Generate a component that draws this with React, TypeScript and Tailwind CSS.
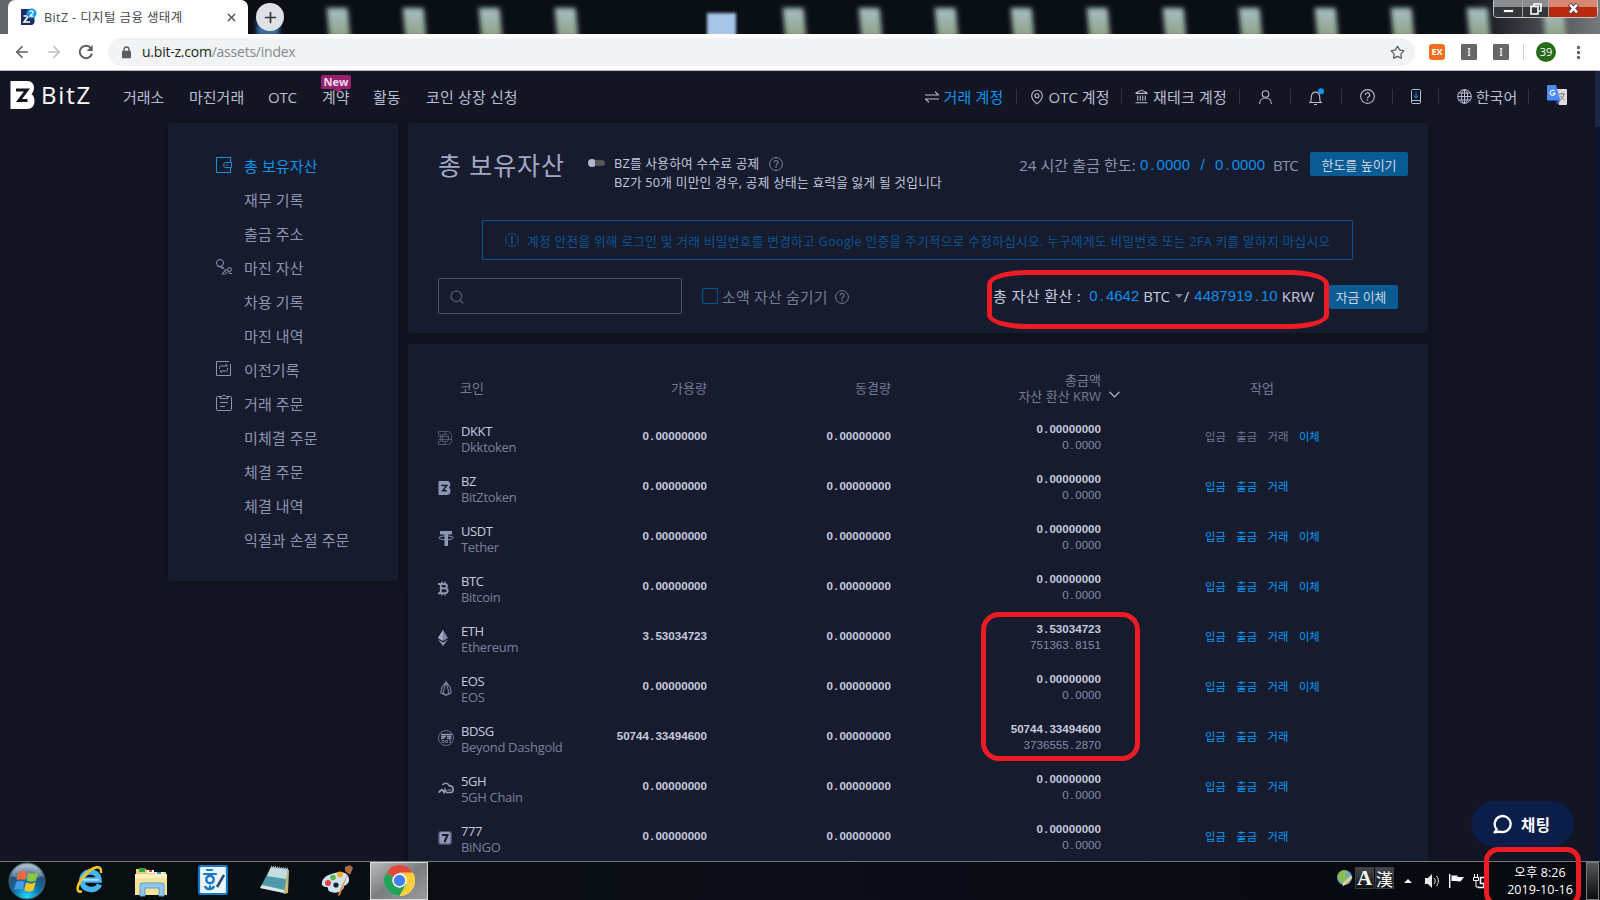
import React from "react";
import { Plus, X, ArrowLeft, ArrowRight, Star, MoreVertical, MapPin, Landmark, Search, ChevronDown } from "lucide-react";

const TILE_POSITIONS = [326, 402, 478, 554, 782, 858, 934, 1010, 1086, 1162, 1238, 1314, 1390, 1466, 1542];

/* Digits keep their own width; every other character gets a digit-wide cell. */
function Num({ value, className = "" }: { value: string; className?: string }) {
  return (
    <span className={"whitespace-pre font-['Liberation_Sans',sans-serif] " + className}>
      {value.split("").map((ch, i) =>
        /\d/.test(ch) ? ch : (
          <span key={i} className="inline-block w-[1ch] text-center">{ch}</span>
        )
      )}
    </span>
  );
}

function Help({ size = 14 }: { size?: number }) {
  return (
    <svg width={size} height={size} viewBox="0 0 14 14" fill="none" stroke="currentColor">
      <circle cx="7" cy="7" r="6.4" strokeWidth="1" />
      <path d="M5 5.500a2 2 0 1 1 3 1.700c-.7.4-1 .7-1 1.500" strokeWidth="1.1" />
      <path d="M7 9.600v1.300" strokeWidth="1.2" />
    </svg>
  );
}

function BMark({ className, z }: { className: string; z: string }) {
  return (
    <svg className={className} viewBox="0 0 24 28">
      <path d="M0 0h17c4 0 6.500 3 6.500 6.500 0 3-1 5-2.500 6.500 2 1.500 3 4 3 7 0 5-3 8-7.500 8H0z" fill="currentColor" />
      <path d="M5.500 9h11l-8 10.500h8.500" fill="none" stroke={z} strokeWidth="3" />
    </svg>
  );
}

function TabStrip() {
  return (
    <div className="relative flex h-[34px] shrink-0 overflow-hidden bg-[#0a0e15]">
      <div className="absolute inset-y-0 left-0 w-[20px] bg-[#626568]" />
      <div className="absolute right-0 top-0 h-[34px] w-[130px] bg-gradient-to-r from-transparent to-[#77797b]" />
      {TILE_POSITIONS.map((x) => (
        <div
          key={x}
          className="absolute top-[8px] h-[30px] w-[21px] skew-x-[5deg] bg-gradient-to-b from-[#a6c0c7] to-[#8f9f80] blur-[2.500px]"
          style={{ left: x + 2 }}
        />
      ))}
      <div className="absolute left-[707px] top-[13px] h-[24px] w-[29px] bg-[#a5c4e6] blur-[1.500px]" />
      <div className="absolute left-[257px] top-[18px] h-[18px] w-[22px] bg-[#3f6fa5] blur-[2px]" />
      <div className="relative z-10 ml-[8px] flex w-[240px] items-center rounded-t-[7px] bg-white pl-[13px] pr-[10px]">
        <svg width="16" height="18" viewBox="0 0 16 18">
          <path d="M0 1h9v7h4c1 5 1 8-2 9H0z" fill="#1c2d62" />
          <path d="M2.500 8h5l-4.500 6h6" fill="none" stroke="#fff" strokeWidth="1.600" />
          <circle cx="10.500" cy="5.500" r="5" fill="#139bf0" />
          <path d="M8.800 4.300c0-2 3.400-2 3.400 0 0 1.300-2 2-3.300 3.800h3.600" fill="none" stroke="#fff" strokeWidth="1.200" />
        </svg>
        <span className="ml-[7px] mt-px whitespace-nowrap text-[12.500px] tracking-[0.400px] text-[#45484c]">BitZ - 디지털 금융 생태계</span>
        <X className="ml-auto size-[13px] text-[#45484c]" strokeWidth={2.4} />
      </div>
      <div className="relative z-10 ml-[8px] mt-[3px] flex size-[28px] items-center justify-center rounded-full bg-[#dee1e6]">
        <Plus className="size-[17px] text-[#35373b]" strokeWidth={2.4} />
      </div>
      <div className="absolute right-[2px] top-[-3px] z-10 flex h-[21px] w-[105px] overflow-hidden rounded-[4px] border border-[#c3c5c8] bg-[#4b4e52]">
        <div className="flex w-[29px] items-center justify-center border-r border-[#a0a2a5] bg-gradient-to-b from-[#8a8c90] from-50% to-[#33363a] to-50%">
          <div className="mt-[7px] h-[4px] w-[11px] border border-[#44484f] bg-white" />
        </div>
        <div className="flex w-[26px] items-center justify-center border-r border-[#a0a2a5] bg-gradient-to-b from-[#8a8c90] from-50% to-[#33363a] to-50%">
          <svg className="mt-[2px]" width="12" height="12" viewBox="0 0 12 12" fill="none" stroke="#fff" strokeWidth="1.600">
            <path d="M4 3V1h7v7H9" /><rect x="1" y="3.500" width="7" height="7.500" />
          </svg>
        </div>
        <div className="flex flex-1 items-center justify-center bg-gradient-to-b from-[#d98672] from-50% to-[#b8290f] to-50%">
          <svg className="mt-[2px]" width="13" height="11" viewBox="0 0 13 11"><path d="M2.500 1l8 9M10.500 1l-8 9" stroke="#5b4040" strokeWidth="4.500" /><path d="M3 1.500l7 8M10 1.500l-7 8" stroke="#fff" strokeWidth="2.600" /></svg>
        </div>
      </div>
    </div>
  );
}

function Toolbar() {
  return (
    <div className="flex h-[37px] shrink-0 items-center border-b border-[#b4b7b8] bg-white pl-[13px] text-[#5a5d61]">
      <ArrowLeft className="size-[18px]" strokeWidth={2.2} />
      <ArrowRight className="ml-[14px] size-[18px] text-[#bcbec1]" strokeWidth={2.2} />
      <svg className="ml-[15px]" width="16" height="16" viewBox="0 0 16 16" fill="none">
        <path d="M13 4.300A6.200 6.200 0 1 0 14 9.500" stroke="currentColor" strokeWidth="2" />
        <path d="M14.700 1v6H8.700z" fill="currentColor" />
      </svg>
      <div className="ml-[14px] flex h-[28px] w-[1307px] items-center rounded-full bg-[#f1f3f4] pl-[14px] pr-[10px]">
        <svg width="9" height="13" viewBox="0 0 9 13"><path d="M2 5V3.500a2.500 2.500 0 0 1 5 0V5" fill="none" stroke="#5a5d61" strokeWidth="1.400" /><rect y="4.800" width="9" height="7.500" rx="1" fill="#5a5d61" /></svg>
        <span className="ml-[11px] text-[14px] tracking-[-0.230px] text-[#85898e]"><span className="text-[#1d1f22]">u.bit-z.com</span>/assets/index</span>
        <Star className="ml-auto size-[15px]" strokeWidth={2} />
      </div>
      <div className="ml-[14px] flex size-[16px] items-center justify-center rounded-[3px] bg-[#f26f21] text-[9px] font-bold text-white">EX</div>
      <div className="ml-[16px] flex size-[16px] items-center justify-center rounded-[1px] bg-[#666] font-['Liberation_Serif',serif] text-[12px] text-white">I</div>
      <div className="ml-[16px] flex size-[16px] items-center justify-center rounded-[1px] bg-[#666] font-['Liberation_Serif',serif] text-[12px] text-white">I</div>
      <div className="ml-[14px] h-[16px] w-px bg-[#cfd1d4]" />
      <div className="ml-[12px] flex size-[20px] items-center justify-center rounded-full bg-[#276a19] text-[11px] text-white">39</div>
      <MoreVertical className="ml-[14px] size-[17px]" strokeWidth={2.8} />
    </div>
  );
}

function Seg({ className, children }: { className: string; children: React.ReactNode }) {
  return (
    <div className={"flex h-[15px] items-center justify-center whitespace-nowrap border-r border-[#2a3050] " + className}>{children}</div>
  );
}

function Header() {
  return (
    <header className="flex h-[52px] shrink-0 items-center bg-[#131523] pb-px text-[15px] text-[#b9bed4]">
      <div className="ml-[10px] flex w-[113px] items-center text-white">
        <BMark className="h-[28px] w-[25px] -mt-[3px]" z="#131523" />
        <span className="-mt-[3px] ml-[6px] font-['Open_Sans',sans-serif] text-[24px] font-medium leading-none tracking-[1.800px]">BitZ</span>
      </div>
      <div className="w-[66px]">거래소</div>
      <div className="w-[79px]">마진거래</div>
      <div className="w-[54px] tracking-[-0.200px]">OTC</div>
      <div className="relative w-[51px]">
        계약
        <div className="absolute -top-[12px] -left-px flex h-[14px] w-[30px] items-center justify-center rounded-[2px] bg-[#97206f] text-[11px] font-bold text-[#f2d8ea]">New</div>
        <div className="absolute top-[2px] left-[12px] border-x-4 border-t-[4px] border-x-transparent border-t-[#97206f]" />
      </div>
      <div className="w-[53px]">활동</div>
      <div className="w-[110px] whitespace-nowrap tracking-[0.150px]">코인 상장 신청</div>
      <div className="ml-auto mr-[28px] flex items-center">
        <Seg className="w-[105px] gap-[5px] text-[#0a95ee]">
          <svg width="14" height="12" viewBox="0 0 14 12" fill="none" stroke="#b9bed4" strokeWidth="1.100"><path d="M0 4h13.500L10 .700M14 8H.500L4 11.300" /></svg>
          <span className="tracking-[0.150px]">거래 계정</span>
        </Seg>
        <Seg className="w-[105px] gap-[4px]"><MapPin className="size-[16px]" strokeWidth={1.6} /><span>OTC 계정</span></Seg>
        <Seg className="w-[118px] gap-[4px]"><Landmark className="size-[15px]" strokeWidth={1.7} /><span className="tracking-[0.200px]">재테크 계정</span></Seg>
        <Seg className="w-[51px]">
          <svg width="13" height="14" viewBox="0 0 13 14" fill="none" stroke="currentColor" strokeWidth="1.100"><circle cx="6.500" cy="4" r="3.300" /><path d="M.600 14c0-8 11.800-8 11.800 0" /></svg>
        </Seg>
        <Seg className="w-[51px]">
          <svg width="18" height="18" viewBox="0 0 18 18" fill="none" stroke="currentColor" strokeWidth="1.100"><path d="M2 14.500h13M3.500 14.500c1-2 .5-5 1-7 1-4.500 7-4.500 8 0 .5 2 0 5 1 7M7 16.500h3" /><circle cx="14" cy="3.300" r="3" fill="#0a95ee" stroke="none" /></svg>
        </Seg>
        <Seg className="w-[51px]"><Help size={15} /></Seg>
        <Seg className="w-[46px]">
          <svg width="10" height="15" viewBox="0 0 10 15" fill="none" stroke="currentColor"><rect x=".5" y=".5" width="9" height="14" rx="1" /><path d="M.5 11.500h9" /><path d="M5 3v6M2.500 6.500L5 9l2.500-2.500" stroke="#0a95ee" /></svg>
        </Seg>
        <Seg className="w-[90px] gap-[4px] pl-[7px]">
          <svg width="15" height="15" viewBox="0 0 15 15" fill="none" stroke="currentColor"><circle cx="7.500" cy="7.500" r="6.800" /><ellipse cx="7.500" cy="7.500" rx="3.200" ry="6.800" /><path d="M7.500.700v13.600M.700 7.500h13.600M1.700 4h11.600M1.700 11h11.600" /></svg>
          한국어
        </Seg>
        <svg className="-mt-[4px] ml-[18px]" width="20" height="20" viewBox="0 0 20 20">
          <path d="M8 4h11a1 1 0 0 1 1 1v14a1 1 0 0 1-1 1h-7z" fill="#dcdcdc" />
          <path d="M12 9h6M15 7.500V9M13 15c2-1 3.500-3 4-6M13.500 11c1 2 2.500 3.500 4 4" stroke="#75797f" fill="none" />
          <path d="M1 0h8l4.500 15.500H1a1 1 0 0 1-1-1V1a1 1 0 0 1 1-1z" fill="#4a8af4" />
          <path d="M10 20l3.500-4.500H9z" fill="#3c4ed0" />
          <path d="M7.600 6.200a2.500 2.500 0 1 0 .5 2H5.600" stroke="#fff" fill="none" strokeWidth="1.100" />
        </svg>
      </div>
    </header>
  );
}

const WalletIcon = (
  <svg width="16" height="16" viewBox="0 0 16 16" fill="none" stroke="#0a95ee"><path d="M14.500 5.500v-5H.500v15h14v-5" /><path d="M15.500 5.500H9.300a1.500 1.500 0 0 0-1.500 1.500v2a1.500 1.500 0 0 0 1.500 1.500h6.200z" stroke="#2a88cc" /><path d="M10 8h2" /></svg>
);
const CoinsIcon = (
  <svg width="16" height="16" viewBox="0 0 16 16" fill="none" stroke="currentColor"><circle cx="4" cy="4" r="3.500" /><path d="M1.500 7.500h2l4 2.500M5 7.500l3 1.500" /><circle cx="13.500" cy="10.500" r="2" /><path d="M16 14.500h-2.500L12 12M5.500 15h4M8.500 12l-1.500 2.500M8.500 12l3 2.500M8 11h3" /></svg>
);
const TransferIcon = (
  <svg width="16" height="16" viewBox="0 0 16 16" fill="none" stroke="currentColor"><path d="M14.500 3v11.500H.500V.500H13" /><path d="M3.500 8V6.500c0-1 .5-1.500 1.500-1.500h6.500L9.500 3M11.500 7v1.500c0 1-.5 1.500-1.500 1.500H4l2 2" /></svg>
);
const ClipboardIcon = (
  <svg width="16" height="17" viewBox="0 0 16 17" fill="none" stroke="currentColor"><path d="M4 2.500H1.500a1 1 0 0 0-1 1V15.500a1 1 0 0 0 1 1h13a1 1 0 0 0 1-1V3.500a1 1 0 0 0-1-1H12" /><path d="M4 4.500V2.500h2C6.500.800 9.500.800 10 2.500h2v2z" /><path d="M4 8.500h8M4 12.500h5" /></svg>
);

const MENU: { label: string; icon?: React.ReactNode; active?: boolean }[] = [
  { label: "총 보유자산", icon: WalletIcon, active: true },
  { label: "재무 기록" },
  { label: "출금 주소" },
  { label: "마진 자산", icon: CoinsIcon },
  { label: "차용 기록" },
  { label: "마진 내역" },
  { label: "이전기록", icon: TransferIcon },
  { label: "거래 주문", icon: ClipboardIcon },
  { label: "미체결 주문" },
  { label: "체결 주문" },
  { label: "체결 내역" },
  { label: "익절과 손절 주문" },
];

function Sidebar() {
  return (
    <aside className="h-[458px] w-[230px] rounded-[3px] bg-[#161b2e] pl-[48px] pt-[26px] shadow-[0_0_8px_rgba(10,12,24,0.6)]">
      {MENU.map((m) => (
        <div key={m.label} className={"flex h-[34px] items-center text-[15px] tracking-[0.120px] " + (m.active ? "text-[#0a95ee]" : "text-[#8f95b1]")}>
          <div className="-mt-[3px] w-[28px]">{m.icon}</div>
          {m.label}
        </div>
      ))}
    </aside>
  );
}

function Summary() {
  return (
    <section className="flex h-[210px] flex-col rounded-[3px] bg-[#161b2e] shadow-[0_0_8px_rgba(10,12,24,0.6)]">
      <div className="flex h-[97px] pl-[30px] pr-[20px]">
        <h1 className="mt-[24px] w-[150px] whitespace-nowrap text-[25px] leading-[36px] tracking-[0.900px] text-[#a2a8c6]">총 보유자산</h1>
        <div className="mt-[36px] flex h-[8px] w-[17px] items-center">
          <div className="size-[8px] shrink-0 rounded-full bg-[#b4b7cf]" />
          <div className="h-[6px] w-[10px] -ml-px rounded-r-[3px] bg-[#565656]" />
        </div>
        <div className="ml-[9px] mt-[31px] whitespace-nowrap text-[12.700px] leading-[19px] tracking-[0.230px] text-[#c3c8dc]">
          <div className="flex items-center">BZ를 사용하여 수수료 공제<span className="ml-[9px] text-[#7e849e]"><Help /></span></div>
          <div>BZ가 50개 미만인 경우, 공제 상태는 효력을 잃게 될 것입니다</div>
        </div>
        <div className="ml-auto mt-[29px] flex h-[24px] items-center whitespace-nowrap text-[15px] text-[#8d93af]">
          <span className="mt-[2px] tracking-[0.100px]">24 시간 출금 한도:</span>
          <Num value="0.0000 / 0.0000" className="ml-[4px] mt-[2px] text-[#0a8fec]" />
          <span className="ml-[8px] mt-[2px] tracking-[-0.800px]">BTC</span>
          <button className="ml-[12px] h-[24px] w-[98px] rounded-[2px] bg-[#095b93] pt-[2px] text-[13px] text-[#c9d6e6]">한도를 높이기</button>
        </div>
      </div>
      <div className="ml-[74px] flex h-[40px] w-[871px] items-center rounded-[1px] border border-[#0a5690] pl-[22px] text-[12.700px] text-[#0a5690]">
        <svg width="14" height="14" viewBox="0 0 14 14" fill="none" stroke="currentColor"><circle cx="7" cy="7" r="6.400" /><path d="M7 3v8" strokeWidth="1.600" /></svg>
        <span className="ml-[8px] mt-px whitespace-nowrap tracking-[0.280px]">계정 안전을 위해 로그인 및 거래 비밀번호를 변경하고 Google 인증을 주기적으로 수정하십시오. 누구에게도 비밀번호 또는 2FA 키를 말하지 마십시오</span>
      </div>
      <div className="mt-[18px] flex h-[36px] items-center whitespace-nowrap pl-[30px] pr-[30px] text-[15px]">
        <div className="flex h-[36px] w-[244px] items-center rounded-[2px] border border-[#4d536b] pl-[10px]"><Search className="mt-[2px] size-[16px] text-[#4b5067]" strokeWidth={2.2} /></div>
        <div className="ml-[20px] size-[16px] rounded-[1px] border border-[#0a5690]" />
        <span className="ml-[4px] mt-[2px] tracking-[0.150px] text-[#757b93]">소액 자산 숨기기</span>
        <span className="ml-[7px] mt-[2px] text-[#757b93]"><Help /></span>
        <div className="ml-auto flex h-[24px] items-center text-[#c8ccdf]">
          <span className="tracking-[0.400px]">총 자산 환산 :</span>
          <Num value="0.4642" className="ml-[8px] text-[#0a8fec]" />
          <span className="ml-[4px] tracking-[-0.300px]">BTC</span>
          <span className="ml-[5px] border-x-4 border-t-4 border-x-transparent border-t-[#7a7f95]" />
          <span className="ml-px">/</span>
          <Num value="4487919.10" className="ml-[5px] text-[#0a8fec]" />
          <span className="ml-[4px]">KRW</span>
          <button className="ml-[15px] mt-[2px] h-[24px] w-[69px] rounded-[2px] bg-[#095b93] pr-[5px] text-[12.800px] text-[#c9d6e6]">자금 이체</button>
        </div>
      </div>
    </section>
  );
}

const DkktIcon = <svg width="14" height="14" viewBox="0 0 14 14" fill="none" stroke="#61667f"><path d="M.5.500h9c2.500 0 4 2 4 4v5c0 2-1.500 4-4 4h-9v-3h2v-7h-2zM4.500 3.500h4c1 0 2 1 2 2v3c0 1-1 2-2 2h-4zM.5 5.500h10M.5 8.500h13M7 .500v3M7 10.500v3" strokeWidth=".8" /></svg>;
const UsdtIcon = <svg width="16" height="15" viewBox="0 0 16 15" fill="#8f95b5"><path d="M2 0h12v3.500H10V15H6.500V3.500H2z" /><ellipse cx="8" cy="6.800" rx="7.300" ry="1.900" fill="none" stroke="#8f95b5" /></svg>;
const BtcIcon = <svg width="11" height="15" viewBox="0 0 11 15" fill="none" stroke="#8f95b5" strokeWidth="1.900"><path d="M0 3h6.500c3.200 0 3.200 4.300 0 4.300H3M6.500 7.300c4.200 0 4.200 5 0 5H0M2.800 3v9" /><path d="M4 .500v2M7 .500v2M4 12.500v2M7 12.500v2" strokeWidth="1.300" /></svg>;
const EthIcon = <svg width="10" height="16" viewBox="0 0 10 16"><path d="M5 0l5 8-5 3-5-3z" fill="#8087a5" /><path d="M5 0v11l-5-3z" fill="#a3a9c6" /><path d="M0 9.500l5 3 5-3L5 16z" fill="#8f95b5" /></svg>;
const EosIcon = <svg className="ml-[2px]" width="12" height="15" viewBox="0 0 12 15" fill="none" stroke="#7b81a0" strokeWidth="1.100"><path d="M6 .800L1.800 6.500.800 12 6 14.300 11.200 12l-1-5.500zM6 .800L3 12l3 2.300L9 12z" /></svg>;
const BdsgIcon = <svg width="16" height="16" viewBox="0 0 16 16" fill="none" stroke="#686e88"><circle cx="8" cy="8" r="7.500" /><path d="M3 4.500h11M3 6.500h4l-2 2h-2M9 6.500h3.500v2H9" strokeWidth="1.500" stroke="#8f95b5" /><path d="M4 10.500h2v2H4zM7.500 10.500h2v2h-2zM11 10.500h1.500v2H11" /></svg>;
const GhIcon = <svg width="16" height="12" viewBox="0 0 16 12" fill="none" stroke="#8f95b5" strokeWidth="1.700"><path d="M4.500 3C6.500.500 10 .500 11.500 4c4.500-.5 4.500 6 1.500 6.500H8.500L7 7.500l-1 3-2-3-3.500 3" /><path d="M9.500 8h4" strokeWidth="1" /></svg>;
const SevenIcon = <svg width="14" height="14" viewBox="0 0 14 14"><rect width="14" height="14" rx="3" fill="#4a5069" /><rect x="1.500" y="1" width="11" height="11.500" rx="1.500" fill="#9197b5" /><path d="M4 4h5.500L6.500 11" fill="none" stroke="#161b2e" strokeWidth="2" /></svg>;

type Coin = { sym: string; name: string; icon: React.ReactNode; free: string; krw: string; transfer: boolean; muted?: boolean };
const ZERO = "0.00000000";
const COINS: Coin[] = [
  { sym: "DKKT", name: "Dkktoken", icon: DkktIcon, free: ZERO, krw: "0.0000", transfer: true, muted: true },
  { sym: "BZ", name: "BitZtoken", icon: <BMark className="h-[14px] w-[13px] text-[#8f95b5]" z="#161b2e" />, free: ZERO, krw: "0.0000", transfer: false },
  { sym: "USDT", name: "Tether", icon: UsdtIcon, free: ZERO, krw: "0.0000", transfer: true },
  { sym: "BTC", name: "Bitcoin", icon: BtcIcon, free: ZERO, krw: "0.0000", transfer: true },
  { sym: "ETH", name: "Ethereum", icon: EthIcon, free: "3.53034723", krw: "751363.8151", transfer: true },
  { sym: "EOS", name: "EOS", icon: EosIcon, free: ZERO, krw: "0.0000", transfer: true },
  { sym: "BDSG", name: "Beyond Dashgold", icon: BdsgIcon, free: "50744.33494600", krw: "3736555.2870", transfer: false },
  { sym: "5GH", name: "5GH Chain", icon: GhIcon, free: ZERO, krw: "0.0000", transfer: false },
  { sym: "777", name: "BiNGO", icon: SevenIcon, free: ZERO, krw: "0.0000", transfer: false },
];

function AssetTable() {
  return (
    <section className="mt-[11px] min-h-0 flex-1 overflow-hidden rounded-t-[3px] bg-[#161b2e] pl-[30px] shadow-[0_0_8px_rgba(10,12,24,0.6)]">
      <div className="flex h-[70px] items-center pt-[18px] text-[13px] leading-[16px] text-[#757b95]">
        <div className="w-[169px] pl-[22px]">코인</div>
        <div className="w-[100px] text-right">가용량</div>
        <div className="w-[184px] text-right">동결량</div>
        <div className="w-[210px] text-right">총금액<br />자산 환산 KRW</div>
        <ChevronDown className="ml-[4px] mt-[13px] size-[19px] text-[#b9bed4]" strokeWidth={1.6} />
        <div className="ml-[126px]">작업</div>
      </div>
      {COINS.map((c) => (
        <div key={c.sym} className="flex h-[50px] items-center text-[#c6cadf]">
          <div className="-mt-[2px] flex w-[23px] items-center">{c.icon}</div>
          <div className="w-[126px] whitespace-nowrap text-[13px] leading-[16px]">
            <div className="tracking-[-0.400px]">{c.sym}</div>
            <div className="tracking-[-0.320px] text-[#7a809a]">{c.name}</div>
          </div>
          <Num value={c.free} className="-mt-[6px] w-[120px] text-right text-[11.600px] font-bold" />
          <Num value={ZERO} className="-mt-[6px] w-[184px] text-right text-[11.600px] font-bold" />
          <div className="flex w-[210px] flex-col text-right text-[11.600px] leading-[16px] -mt-[4px]">
            <Num value={c.free} className="font-bold" />
            <Num value={c.krw} className="text-[#858ba6]" />
          </div>
          <div className={"-mt-[4px] ml-[104px] flex gap-[10.500px] text-[11.300px] " + (c.muted ? "text-[#737993]" : "text-[#0a9cf8]")}>
            <span>입금</span><span>출금</span><span>거래</span>
            {c.transfer && <span className="text-[#0a9cf8]">이체</span>}
          </div>
        </div>
      ))}
    </section>
  );
}

function Taskbar() {
  return (
    <footer className="flex h-[39px] shrink-0 items-center overflow-hidden border-t border-[#73767a] bg-gradient-to-r from-[#080f10] via-[#0a0d16] to-[#07090e] text-white">
      <svg className="ml-[7px]" width="40" height="38" viewBox="0 0 40 39">
        <defs>
          <radialGradient id="orb" cx=".5" cy=".95" r=".9"><stop offset="0" stopColor="#1fdcff" /><stop offset=".4" stopColor="#0f75aa" /><stop offset=".75" stopColor="#244f75" /><stop offset="1" stopColor="#9ab0c0" /></radialGradient>
        </defs>
        <circle cx="20" cy="19.500" r="18.500" fill="url(#orb)" stroke="#45606f" />
        <path d="M4 14a17 17 0 0 1 32 0c-9 5-23 5-32 0" fill="#fff" opacity=".28" />
        <path d="M11.500 10.500c3.500-2 6-1.500 8.500 0l-2.300 8.300c-2.500-1.500-5-1.500-8.500 0z" fill="#f1693a" />
        <path d="M21.500 11c3.500 1.500 6.500 1.500 10-.5l-2.300 8.500c-3.500 2-6 1.500-9.500 0z" fill="#8cc63f" />
        <path d="M9 20.500c3.500-2 6-1.500 8.500 0l-2.300 8.300c-2.500-1.500-5-1.500-8.500 0z" fill="#4b9be8" />
        <path d="M19 21c3.500 1.500 6.500 1.500 10-.5L26.700 29c-3.500 2-6 1.500-9.500 0z" fill="#fbc62b" />
      </svg>
      <svg className="-mt-[2px] ml-[26px]" width="32" height="32" viewBox="0 0 32 32" fill="none">
        <path d="M26.500 20.500C24 27 11 28 9 18 7 6 25 4 26 16H10" stroke="#45b5ef" strokeWidth="5.500" />
        <path d="M26 15.800H10" stroke="#a2e2ff" strokeWidth="2" />
        <path d="M8 27.500C2 29 4 19 13 10 20 2.500 29 .500 28 8" fill="none" stroke="#f7c51d" strokeWidth="2.600" strokeLinecap="round" />
      </svg>
      <svg className="ml-[30px]" width="33" height="31" viewBox="0 0 33 31">
        <path d="M1 3h10l2 3h18v22H1z" fill="#e9cd77" /><path d="M4 2h6v4H4z" fill="#28a745" /><path d="M12 4h7v3h-7z" fill="#fff" /><path d="M14 4h3v2h-3z" fill="#d94335" /><path d="M20 6h9v3h-9z" fill="#e8f3ff" /><path d="M22 6h4v2h-4z" fill="#3b90d8" />
        <path d="M0 8h32v21H0z" fill="#f6e39b" /><path d="M0 8h32v4H0z" fill="#fbf0bf" />
        <path d="M5 30V19c0-1.500 1-2 2-2h20c1 0 2 .500 2 2v11h-5v-8H10v8z" fill="#8fc8e8" stroke="#5a9fc6" />
      </svg>
      <svg className="-mt-[3px] ml-[30px]" width="30" height="30" viewBox="0 0 30 30" fill="none">
        <rect x="1" y="1" width="28" height="28" rx="2" fill="#eaf5fd" stroke="#1878c6" strokeWidth="2.200" />
        <path d="M9 5h5M6 9h12" stroke="#1878c6" strokeWidth="2.200" strokeLinecap="round" /><circle cx="12" cy="14.500" r="3.700" stroke="#1878c6" strokeWidth="2.400" />
        <path d="M7 21c1 4 8 4 9 0M11 21.500h2" stroke="#1878c6" strokeWidth="2.400" /><path d="M26 10l-7 12" stroke="#2d4d75" strokeWidth="2.500" />
      </svg>
      <svg className="-mt-[2px] ml-[31px]" width="32" height="30" viewBox="0 0 32 30">
        <path d="M12 3l18 2-1 23-4 1z" fill="#c9b873" /><path d="M12 2l17 2-4 24-24-5z" fill="#4e9aa8" /><path d="M12 2l17 2-2 10-19-3z" fill="#c4dde0" /><path d="M1 23l24 5 .500-3L3 20z" fill="#d8e8ea" /><path d="M12 2l17 2" stroke="#a7afb5" strokeWidth="2.500" strokeDasharray="1 1" />
      </svg>
      <svg className="-mt-[2px] ml-[30px]" width="33" height="33" viewBox="0 0 33 33">
        <path d="M14 9c9-3 15 2 14 8-1 3-3 4-5 5 0 5-7 8-13 6-4-1-2-4-4-5-3 0-6-1-5-5 1-5 7-8 13-9z" fill="#cfe3f4" />
        <circle cx="7" cy="19" r="3" fill="#e2473b" /><circle cx="12" cy="13.500" r="2.800" fill="#61b64a" /><circle cx="19" cy="10.500" r="3" fill="#f0ae28" /><circle cx="15" cy="21" r="2.600" fill="#16202f" />
        <path d="M28 7l-9 24-2 1 1-4z" fill="#e98b2c" /><path d="M24 3l5-2 3 3-3 7-5-4z" fill="#a9683f" />
      </svg>
      <div className="ml-[16px] flex h-[38px] w-[58px] items-center justify-center border border-[#d7d9da] bg-gradient-to-br from-[#b9bbbc] via-[#7b7d7f] to-[#9a9c9e]">
        <svg className="-mt-px" width="31" height="31" viewBox="0 0 30 30">
          <circle cx="15" cy="15" r="15" fill="#ddd" />
          <path d="M15 15L2 7.500A15 15 0 0 1 28 7.500H15z" fill="#e04a3c" />
          <path d="M15 15L2 7.500A15 15 0 0 0 15 30l6.500-11.300z" fill="#25a15a" />
          <path d="M15 7.500h13A15 15 0 0 1 15 30l6.500-11.300z" fill="#fdd03b" />
          <circle cx="15" cy="15" r="7" fill="#fff" /><circle cx="15" cy="15" r="5.500" fill="#4580ef" />
        </svg>
      </div>
      <div className="ml-auto flex items-center">
        <svg className="-mt-[5px]" width="17" height="17" viewBox="0 0 17 17"><circle cx="7.500" cy="7.500" r="7.500" fill="#6fa3c2" /><path d="M2 3c3-3 6-3 8-1l-2 4 3 3-4 5C3 12 0 8 2 3z" fill="#8fbe4c" /><path d="M15 7.500l-6.500 6.500-2.500 1.500 1-3 6.500-6z" fill="#f2c14a" stroke="#e9e9e9" strokeWidth=".9" /></svg>
        <div className="-mt-[6px] ml-px flex h-[22px] w-[19px] items-center justify-center border border-[#3a3d42] bg-gradient-to-b from-[#44474b] to-[#111417] font-['Liberation_Serif',serif] text-[21px] font-bold leading-none">A</div>
        <div className="-mt-[6px] ml-px flex h-[22px] w-[19px] items-center justify-center border border-[#3a3d42] bg-gradient-to-b from-[#44474b] to-[#111417] font-['Noto_Sans_CJK_KR',sans-serif] text-[17px] leading-none">漢</div>
        <div className="ml-[10px] border-x-4 border-b-4 border-x-transparent border-b-white" />
        <svg className="ml-[13px]" width="15" height="14" viewBox="0 0 15 14"><path d="M0 4h3l4-4v14L3 10H0z" fill="#e8e8e8" /><path d="M9 4c1.500 2 1.500 4 0 6M11.500 2c2.500 3 2.500 7 0 10" stroke="#e8e8e8" fill="none" /></svg>
        <svg className="ml-[9px]" width="15" height="14" viewBox="0 0 15 14"><path d="M.700 0v14" stroke="#fff" strokeWidth="1.400" /><path d="M2.500 1.500h6V3h6.500l-3.500 4.500H9L8 7H2.500z" fill="#fff" /></svg>
        <svg className="ml-[9px]" width="15" height="15" viewBox="0 0 15 15" fill="none" stroke="#fff"><path d="M1.500 0v3M4.500 0v3M.500 3.500h5v3h-5zM3 6.500V13h3" /><path d="M7.500 3.500h8v6h-8zM5 13.500h8M11 9.500v4" strokeWidth="1.600" /></svg>
        <div className="ml-[8px] w-[88px] text-center text-[12.500px] leading-[17px] tracking-[0.050px]">오후 8:26<br />2019-10-16</div>
        <div className="ml-[2px] mr-px h-[38px] w-[13px] border border-[#777a7e] bg-gradient-to-b from-[#55585b] to-[#0c0f12]" />
      </div>
    </footer>
  );
}

export default function App() {
  return (
    <div className="relative flex h-[900px] w-[1600px] flex-col overflow-hidden bg-[#131523] font-['Open_Sans','Noto_Sans_CJK_KR',sans-serif] leading-[20px]">
      <TabStrip />
      <Toolbar />
      <div className="flex min-h-0 flex-1">
        <div className="flex min-w-0 flex-1 flex-col">
          <Header />
          <main className="flex min-h-0 flex-1 gap-[10px] pl-[168px]">
            <Sidebar />
            <div className="flex w-[1020px] flex-col">
              <Summary />
              <AssetTable />
            </div>
          </main>
        </div>
        <div className="w-[5px] bg-[#0d1430]"><div className="h-[56px] bg-[#1d2648]" /></div>
      </div>
      <Taskbar />

      <div className="absolute left-[1471px] top-[801px] flex h-[46px] w-[103px] items-center rounded-full bg-[#0b1d49] pl-[22px] text-[15.500px] font-bold text-white">
        <svg width="20" height="20" viewBox="0 0 20 20" fill="none" stroke="#fff" strokeWidth="2.300"><path d="M3.800 15.500A8 8 0 1 1 7 17.600l-5.500.8z" strokeLinejoin="round" /></svg>
        <span className="ml-[8px] mt-px tracking-[0.500px]">채팅</span>
      </div>

      <div className="pointer-events-none absolute left-[987px] top-[270px] h-[59px] w-[342px] rounded-[40px/14px] border-[5px] border-[#ed1c24]" />
      <div className="pointer-events-none absolute left-[981px] top-[612px] h-[149px] w-[159px] rounded-[18px] border-[5px] border-[#ed1c24]" />
      <div className="pointer-events-none absolute left-[1484px] top-[847px] h-[60px] w-[97px] rounded-[14px] border-[5px] border-[#ed1c24]" />
    </div>
  );
}
